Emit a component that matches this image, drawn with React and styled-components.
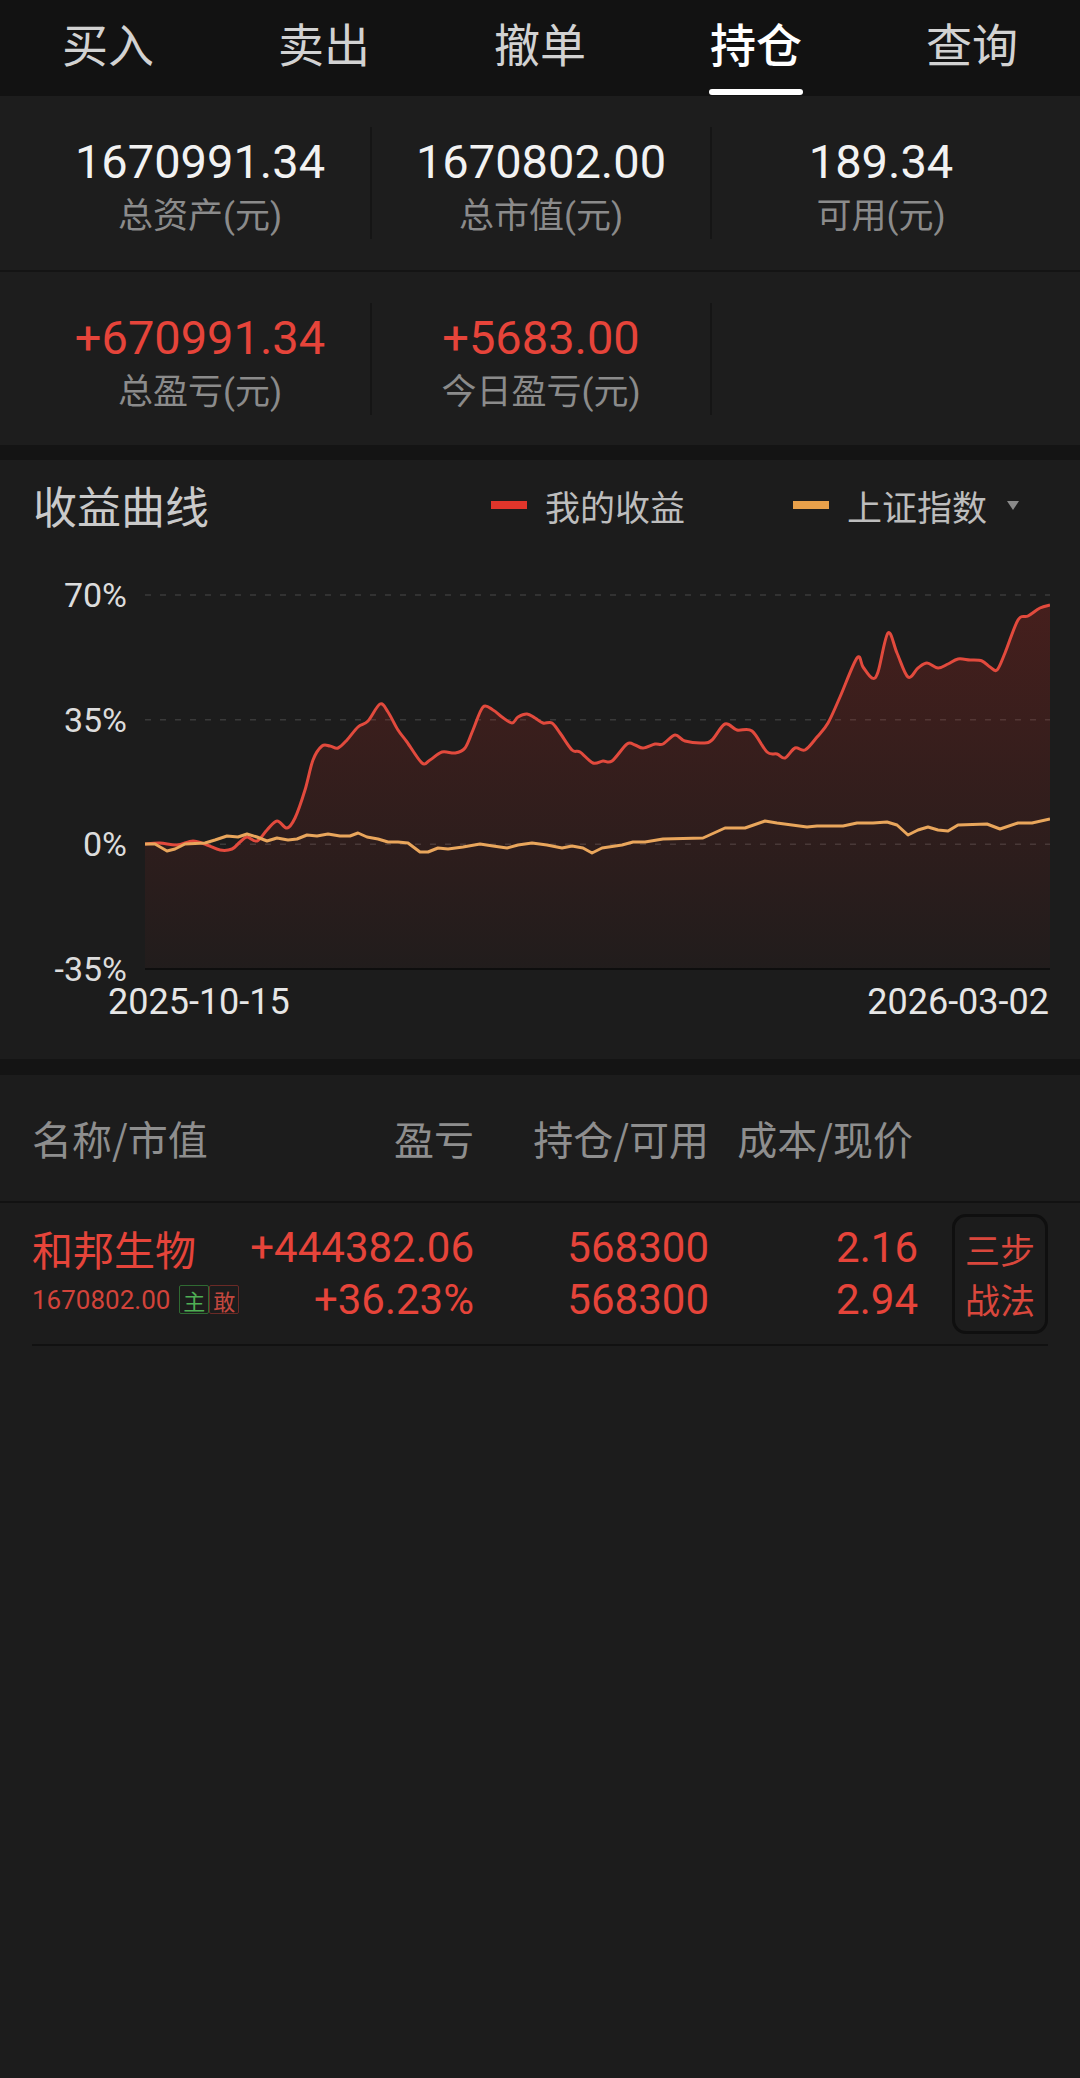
import React from 'react'
import styled, { createGlobalStyle } from 'styled-components'

const GlobalStyle = createGlobalStyle`
    html, body {
        margin: 0;
        padding: 0;
        background: #141414;
    }
    * {
        box-sizing: border-box;
    }
`

const RED = '#e6443a'
const FONT = `Roboto, "Noto Sans CJK SC", sans-serif`

const Page = styled.div`
    width: 1080px;
    min-height: 100vh;
    display: flex;
    flex-direction: column;
    background: #141414;
    font-family: ${FONT};
`
const TabBar = styled.div`
    height: 96px;
    display: grid;
    grid-template-columns: repeat(5, 1fr);
    background: #121212;
`
const Tab = styled.div`
    display: flex;
    flex-direction: column;
    align-items: center;
    font-family: "Noto Sans CJK SC", sans-serif;
    font-size: 46px;
    line-height: 84px;
    color: ${p => (p.$active ? '#ffffff' : '#d2d2d2')};
    font-weight: ${p => (p.$active ? 500 : 400)};
`
const Indicator = styled.div`
    width: 94px;
    height: 6px;
    margin-top: 5px;
    border-radius: 3px;
    background: ${p => (p.$show ? '#ffffff' : 'transparent')};
`
const Summary = styled.div`
    background: #1d1d1d;
`
const SummaryRow = styled.div`
    display: grid;
    grid-template-columns: repeat(3, 1fr);
    padding: 31px 30px ${p => (p.$last ? '30px' : '31px')};
    border-bottom: ${p => (p.$last ? 'none' : '2px solid #141414')};
`
const Cell = styled.div`
    height: 112px;
    padding-top: 7px;
    display: flex;
    flex-direction: column;
    align-items: center;
    gap: 5px;
    border-left: ${p => (p.$first ? 'none' : '2px solid #151515')};
`
const Value = styled.div`
    font-family: Roboto, sans-serif;
    font-size: 47px;
    line-height: 56px;
    color: ${p => (p.$red ? RED : '#f2f2f2')};
`
const Label = styled.div`
    font-size: 35px;
    line-height: 44px;
    color: #8b8b8b;
`
const Section = styled.div`
    margin-top: 15px;
    background: #1c1c1c;
    padding: 20px 0 39px;
`
const TitleRow = styled.div`
    display: flex;
    align-items: center;
    height: 50px;
    padding: 0 61px 0 33px;
`
const Title = styled.div`
    font-family: "Noto Sans CJK SC", sans-serif;
    font-size: 44px;
    color: #cacaca;
`
const Legend = styled.div`
    margin-left: auto;
    display: flex;
    align-items: center;
    gap: 108px;
`
const LegendItem = styled.div`
    display: flex;
    align-items: center;
    font-family: "Noto Sans CJK SC", sans-serif;
    font-size: 35px;
    color: #bdbdbd;
`
const Swatch = styled.span`
    width: 36px;
    height: 8px;
    margin-right: 18px;
    background: ${p => p.$color};
`
const Caret = styled.span`
    width: 0;
    height: 0;
    margin-left: 20px;
    border-left: 6px solid transparent;
    border-right: 6px solid transparent;
    border-top: 9px solid #8a8a8a;
`
const ChartBody = styled.div`
    display: flex;
    height: 404px;
    margin-top: 50px;
`
const YAxis = styled.div`
    width: 127px;
    margin-right: 18px;
    display: flex;
    flex-direction: column;
    justify-content: space-between;
    align-items: flex-end;
    font-family: Roboto, sans-serif;
    font-size: 34px;
    line-height: 30px;
    color: #dcdcdc;
`
const DateRow = styled.div`
    display: flex;
    justify-content: space-between;
    padding: 0 31px 0 108px;
    font-family: Roboto, sans-serif;
    font-size: 36px;
    line-height: 36px;
    color: #e6e6e6;
`
const Holdings = styled.div`
    flex: 1;
    margin-top: 16px;
    background: #1c1c1c;
`
const HeaderBar = styled.div`
    border-bottom: 2px solid #121212;
`
const Grid = styled.div`
    display: grid;
    grid-template-columns: 218px 224px 235px 209px 130px;
    margin: 0 32px;
    align-items: center;
`
const HeaderGrid = styled(Grid)`
    height: 126px;
    font-family: "Noto Sans CJK SC", sans-serif;
    font-size: 40px;
    color: #8e8e8e;
`
const HeadCell = styled.div`
    text-align: ${p => p.$align || 'right'};
    white-space: nowrap;
    padding-right: ${p => p.$pad || 0}px;
`
const Row = styled(Grid)`
    height: 143px;
    border-bottom: 2px solid #111111;
`
const Stack = styled.div`
    display: flex;
    flex-direction: column;
    align-items: ${p => (p.$left ? 'flex-start' : 'flex-end')};
`
const Line = styled.div`
    height: 52px;
    display: flex;
    align-items: center;
    white-space: nowrap;
    font-family: ${FONT};
    font-size: ${p => p.$size || 42}px;
    color: ${p => p.$color || RED};
`
const Badge = styled.span`
    width: 30px;
    height: 29px;
    display: inline-flex;
    align-items: center;
    justify-content: center;
    font-family: "Noto Sans CJK SC", sans-serif;
    font-size: 22px;
    border: 1px solid ${p => p.$border};
    color: ${p => p.$color};
    border-radius: 2px;
`
const Badges = styled.span`
    display: inline-flex;
    margin-left: 9px;
`
const ActionCell = styled.div`
    display: flex;
    justify-content: flex-end;
`
const Action = styled.div`
    width: 96px;
    height: 120px;
    border: 3px solid #0f0f0f;
    border-radius: 14px;
    display: flex;
    flex-direction: column;
    align-items: center;
    justify-content: center;
    font-family: "Noto Sans CJK SC", sans-serif;
    font-size: 35px;
    line-height: 50px;
    color: #d9473c;
`

const X0 = 145
const Y0 = 580

const redPts = [
    [145, 844], [160, 843], [177, 845], [193, 841], [207, 845], [220, 850], [232, 849], [240, 842], [247, 837], [257, 841],
    [267, 830], [277, 821], [287, 828], [295, 818], [305, 790], [313, 760], [322, 746], [330, 746], [338, 748], [347, 740],
    [358, 727], [368, 721], [380, 704], [388, 712], [398, 730], [407, 742], [422, 763], [430, 760], [442, 752], [455, 753],
    [465, 748], [473, 730], [483, 707], [493, 710], [502, 717], [512, 723], [518, 717], [527, 714], [535, 718], [543, 723],
    [552, 723], [560, 733], [572, 750], [580, 752], [593, 763], [603, 761], [612, 761], [627, 744], [635, 745], [643, 748],
    [655, 744], [663, 744], [675, 735], [685, 741], [703, 743], [712, 740], [725, 724], [737, 730], [752, 731], [767, 752],
    [777, 754], [785, 758], [795, 748], [805, 750], [817, 737], [828, 723], [840, 697], [857, 658], [863, 667], [872, 678],
    [878, 672], [888, 633], [897, 653], [908, 677], [918, 668], [927, 663], [938, 668], [948, 664], [958, 659], [970, 660],
    [982, 661], [990, 667], [997, 670], [1005, 653], [1018, 620], [1028, 616], [1040, 608], [1050, 605],
]

const indexPts = [
    [145, 844], [155, 844], [167, 851], [175, 849], [185, 844], [205, 843], [215, 840], [227, 836], [238, 837], [247, 834],
    [257, 837], [267, 841], [277, 838], [288, 840], [297, 839], [307, 835], [317, 836], [328, 834], [340, 836], [350, 836],
    [358, 833], [367, 837], [378, 839], [388, 842], [398, 842], [408, 843], [420, 852], [428, 852], [438, 848], [448, 849],
    [463, 847], [480, 844], [493, 846], [507, 848], [518, 845], [532, 843], [547, 845], [562, 848], [572, 846], [583, 848],
    [592, 853], [602, 848], [622, 845], [633, 842], [645, 842], [663, 839], [703, 838], [725, 828], [745, 828], [765, 821],
    [777, 823], [807, 827], [817, 826], [843, 826], [857, 823], [873, 823], [887, 822], [897, 825], [908, 835], [918, 830],
    [928, 827], [938, 830], [948, 831], [958, 825], [987, 824], [1000, 829], [1018, 823], [1032, 823], [1050, 819],
]

const toLocal = pts => pts.map(([x, y]) => [x - X0, y - Y0])

// catmull-rom -> cubic bezier
function smooth(pts) {
    let d = `M${pts[0][0]},${pts[0][1]}`
    for (let i = 0; i < pts.length - 1; i++) {
        const p0 = pts[i - 1] || pts[i]
        const p1 = pts[i]
        const p2 = pts[i + 1]
        const p3 = pts[i + 2] || p2
        const c1x = p1[0] + (p2[0] - p0[0]) / 6
        const c1y = p1[1] + (p2[1] - p0[1]) / 6
        const c2x = p2[0] - (p3[0] - p1[0]) / 6
        const c2y = p2[1] - (p3[1] - p1[1]) / 6
        d += ` C${c1x.toFixed(1)},${c1y.toFixed(1)} ${c2x.toFixed(1)},${c2y.toFixed(1)} ${p2[0]},${p2[1]}`
    }
    return d
}

const W = 905
const H = 404
const grid = [15, 139.67, 264.33, 389]

function Chart() {
    const red = toLocal(redPts)
    const idx = toLocal(indexPts)
    const line = smooth(red)
    const area = `${line} L${W},${grid[3]} L0,${grid[3]} Z`
    return (
        <svg width={W} height={H} viewBox={`0 0 ${W} ${H}`}>
            <defs>
                <linearGradient id="fillRed" x1="0" y1="0" x2="0" y2="1">
                    <stop offset="0%" stopColor="#c8281e" stopOpacity="0.24" />
                    <stop offset="100%" stopColor="#c8281e" stopOpacity="0.03" />
                </linearGradient>
            </defs>
            {grid.slice(0, 3).map(y => (
                <line key={y} x1="0" x2={W} y1={y} y2={y} stroke="#3a3a3a" strokeWidth="1.5" strokeDasharray="6 9" />
            ))}
            <path d={area} fill="url(#fillRed)" />
            <line x1="0" x2={W} y1={grid[3]} y2={grid[3]} stroke="#0e0e0e" strokeWidth="2" />
            <path d={line} fill="none" stroke="#e24a3d" strokeWidth="3" strokeLinejoin="round" />
            <polyline
                points={idx.map(p => p.join(',')).join(' ')}
                fill="none"
                stroke="#e9a65c"
                strokeWidth="3"
                strokeLinejoin="round"
            />
        </svg>
    )
}

const tabs = ['买入', '卖出', '撤单', '持仓', '查询']

export default function App() {
    return (
        <Page>
            <GlobalStyle />
            <TabBar>
                {tabs.map(t => (
                    <Tab key={t} $active={t === '持仓'}>
                        {t}
                        <Indicator $show={t === '持仓'} />
                    </Tab>
                ))}
            </TabBar>

            <Summary>
                <SummaryRow>
                    <Cell $first>
                        <Value>1670991.34</Value>
                        <Label>总资产(元)</Label>
                    </Cell>
                    <Cell>
                        <Value>1670802.00</Value>
                        <Label>总市值(元)</Label>
                    </Cell>
                    <Cell>
                        <Value>189.34</Value>
                        <Label>可用(元)</Label>
                    </Cell>
                </SummaryRow>
                <SummaryRow $last>
                    <Cell $first>
                        <Value $red>+670991.34</Value>
                        <Label>总盈亏(元)</Label>
                    </Cell>
                    <Cell>
                        <Value $red>+5683.00</Value>
                        <Label>今日盈亏(元)</Label>
                    </Cell>
                    <Cell />
                </SummaryRow>
            </Summary>

            <Section>
                <TitleRow>
                    <Title>收益曲线</Title>
                    <Legend>
                        <LegendItem>
                            <Swatch $color="#e0352b" />
                            我的收益
                        </LegendItem>
                        <LegendItem>
                            <Swatch $color="#e8a04a" />
                            上证指数
                            <Caret />
                        </LegendItem>
                    </Legend>
                </TitleRow>
                <ChartBody>
                    <YAxis>
                        <span>70%</span>
                        <span>35%</span>
                        <span>0%</span>
                        <span>-35%</span>
                    </YAxis>
                    <Chart />
                </ChartBody>
                <DateRow>
                    <span>2025-10-15</span>
                    <span>2026-03-02</span>
                </DateRow>
            </Section>

            <Holdings>
                <HeaderBar>
                    <HeaderGrid>
                        <HeadCell $align="left">名称/市值</HeadCell>
                        <HeadCell>盈亏</HeadCell>
                        <HeadCell>持仓/可用</HeadCell>
                        <HeadCell $pad={5}>成本/现价</HeadCell>
                        <div />
                    </HeaderGrid>
                </HeaderBar>
                <Row>
                    <Stack $left>
                        <Line $size={41}>和邦生物</Line>
                        <Line $size={26} $color="#d2433a">
                            1670802.00
                            <Badges>
                                <Badge $border="#2f6a32" $color="#4fae54">主</Badge>
                                <Badge $border="#6a2a26" $color="#c4483f">敢</Badge>
                            </Badges>
                        </Line>
                    </Stack>
                    <Stack>
                        <Line>+444382.06</Line>
                        <Line>+36.23%</Line>
                    </Stack>
                    <Stack>
                        <Line>568300</Line>
                        <Line>568300</Line>
                    </Stack>
                    <Stack>
                        <Line>2.16</Line>
                        <Line>2.94</Line>
                    </Stack>
                    <ActionCell>
                        <Action>
                            <span>三步</span>
                            <span>战法</span>
                        </Action>
                    </ActionCell>
                </Row>
            </Holdings>
        </Page>
    )
}
